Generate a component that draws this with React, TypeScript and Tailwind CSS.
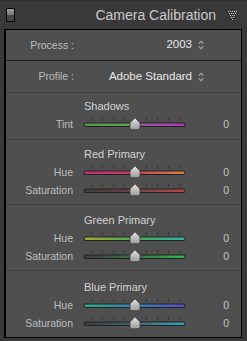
import React from "react";

type Stop = [number, string];

const TICKS = [8, 19, 30, 41, 63, 74, 85, 96];

function Slider({ id, stops }: { id: string; stops: Stop[] }) {
  return (
    <svg width="104" height="14" viewBox="0 0 104 14" className="block shrink-0">
      <defs>
        <linearGradient id={id} x1="0" y1="0" x2="1" y2="0">
          {stops.map(([o, c], i) => (
            <stop key={i} offset={o} stopColor={c} />
          ))}
        </linearGradient>
        <linearGradient id={id + "t"} x1="0" y1="0" x2="0" y2="1">
          <stop offset="0" stopColor="#e4e4e4" />
          <stop offset="1" stopColor="#9a9a9a" />
        </linearGradient>
      </defs>
      {TICKS.map((x) => (
        <rect key={x} x={x} y={1} width={1} height={3} fill="#343434" />
      ))}
      <rect x={0.5} y={5.5} width={102} height={4.5} rx={2.2} fill="#222" />
      <rect x={1.5} y={6.5} width={100} height={2.5} rx={1.2} fill={`url(#${id})`} />
      <path
        d="M52 0.8 L57 5.8 L57 11 Q57 12.8 55.2 12.8 L48.8 12.8 Q47 12.8 47 11 L47 5.8 Z"
        fill={`url(#${id}t)`}
        stroke="#3a3a3a"
        strokeWidth="0.8"
      />
    </svg>
  );
}

function SliderRow({ label, id, stops }: { label: string; id: string; stops: Stop[] }) {
  return (
    <div className="flex h-[18px] items-center">
      <div className="w-[67px] text-right text-[10.5px] leading-none text-[#bebebe]">{label}</div>
      <div className="ml-[10px]">
        <Slider id={id} stops={stops} />
      </div>
      <div className="flex-1 pr-[12px] text-right text-[10.5px] leading-none text-[#c4c4c4]">0</div>
    </div>
  );
}

function Title({ children }: { children: React.ReactNode }) {
  return (
    <div className="flex h-[18px] items-center pl-[78px] text-[11px] leading-none text-[#d2d2d2]">
      {children}
    </div>
  );
}

function Arrows() {
  return (
    <svg width="6" height="10" viewBox="0 0 6 10" className="ml-[6px] block">
      <path d="M0.8 3.6 L3 1.2 L5.2 3.6" fill="none" stroke="#9c9c9c" strokeWidth="1.3" />
      <path d="M0.8 6.4 L3 8.8 L5.2 6.4" fill="none" stroke="#9c9c9c" strokeWidth="1.3" />
    </svg>
  );
}

function DotTriangle() {
  const dots: [number, number][] = [];
  const rows = [
    [0, 2, 4, 6, 8],
    [1, 3, 5, 7],
    [2, 4, 6],
    [3, 5],
    [4],
  ];
  rows.forEach((r, i) => r.forEach((x) => dots.push([x, i * 2])));
  return (
    <svg width="9" height="9" viewBox="0 0 9 9" className="block">
      {dots.map(([x, y], i) => (
        <rect key={i} x={x} y={y} width={1} height={1} fill="#c8c8c8" />
      ))}
    </svg>
  );
}

export default function App() {
  return (
    <div
      className="relative h-[341px] w-[247px] overflow-hidden bg-[#393939]"
      style={{ fontFamily: '"Liberation Sans", Arial, sans-serif' }}
    >
      {/* header */}
      <div className="flex h-[29px] items-center border-t border-[#2c2c2c]">
        <div className="ml-[6px] flex h-[14px] w-[9px] flex-col border border-black">
          <div className="flex-1 bg-gradient-to-b from-[#a0a0a0] to-[#767676]" />
          <div className="flex-1 bg-[#474747]" />
        </div>
        <div className="flex-1 pr-[12px] text-right text-[14px] leading-none text-[#c9c9c9]">
          Camera Calibration
        </div>
        <div className="mr-[10px] mt-[1px]">
          <DotTriangle />
        </div>
      </div>

      {/* panel */}
      <div className="ml-[4px] w-[238px] border-b border-l-2 border-r border-t border-black bg-[#4f4f4f]">
        <div className="flex h-[30px] items-center">
          <div className="w-[68px] text-right text-[10.5px] leading-none text-[#bcbcbc]">Process :</div>
          <div className="w-[118px] text-right text-[11.5px] leading-none text-[#e8e8e8]">2003</div>
          <Arrows />
        </div>
        <div className="h-px bg-[#1c1c1c]" />
        <div className="flex h-[31px] items-center">
          <div className="w-[68px] text-right text-[10.5px] leading-none text-[#bcbcbc]">Profile :</div>
          <div className="w-[118px] text-right text-[11.5px] leading-none text-[#e8e8e8]">Adobe Standard</div>
          <Arrows />
        </div>
        <div className="h-px bg-[#3f3f3f]" />

        <div className="h-[46px] pt-[4px]">
          <Title>Shadows</Title>
          <SliderRow
            label="Tint"
            id="tint"
            stops={[
              [0, "#4e9a48"],
              [0.45, "#6a9a60"],
              [0.55, "#9a5aa0"],
              [1, "#a83cb8"],
            ]}
          />
        </div>
        <div className="h-px bg-[#3f3f3f]" />

        <div className="h-[64px] pt-[5px]">
          <Title>Red Primary</Title>
          <SliderRow
            label="Hue"
            id="rh"
            stops={[
              [0, "#c82c78"],
              [0.5, "#c84060"],
              [1, "#d4843c"],
            ]}
          />
          <SliderRow
            label="Saturation"
            id="rs"
            stops={[
              [0, "#3c3c3c"],
              [0.5, "#6c4444"],
              [1, "#b84848"],
            ]}
          />
        </div>
        <div className="h-px bg-[#3f3f3f]" />

        <div className="h-[65px] pt-[6px]">
          <Title>Green Primary</Title>
          <SliderRow
            label="Hue"
            id="gh"
            stops={[
              [0, "#a8a834"],
              [0.5, "#48b04c"],
              [1, "#30b4a8"],
            ]}
          />
          <SliderRow
            label="Saturation"
            id="gs"
            stops={[
              [0, "#3c3c3c"],
              [0.5, "#3e6e48"],
              [1, "#30b44c"],
            ]}
          />
        </div>
        <div className="h-px bg-[#3f3f3f]" />

        <div className="h-[66px] pt-[7px]">
          <Title>Blue Primary</Title>
          <SliderRow
            label="Hue"
            id="bh"
            stops={[
              [0, "#30ac88"],
              [0.5, "#3084b4"],
              [1, "#5a4cc8"],
            ]}
          />
          <SliderRow
            label="Saturation"
            id="bs"
            stops={[
              [0, "#3c3c3c"],
              [0.5, "#3e6670"],
              [1, "#30a8bc"],
            ]}
          />
        </div>
      </div>
    </div>
  );
}
